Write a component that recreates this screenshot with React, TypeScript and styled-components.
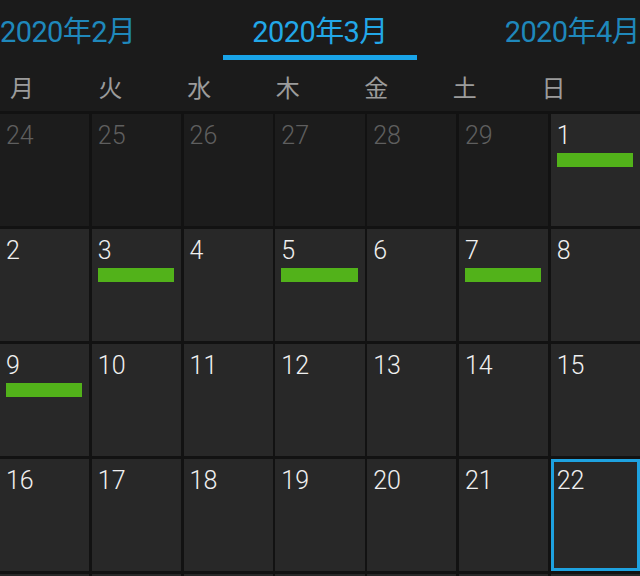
import styled, { createGlobalStyle } from "styled-components";

const GlobalStyle = createGlobalStyle`
  html, body {
    margin: 0;
    padding: 0;
    background: #1b1b1b;
    overflow: hidden;
  }
  body {
    font-family: Roboto, "Noto Sans CJK JP", sans-serif;
  }
`;

const Screen = styled.div`
  width: 640px;
  height: 576px;
  overflow: hidden;
  background: #1b1b1b;
  display: flex;
  flex-direction: column;
`;

const MonthTabs = styled.div`
  display: flex;
  justify-content: space-between;
  align-items: flex-start;
  height: 62px;
  flex-shrink: 0;
`;

const MonthTab = styled.div<{ $active?: boolean }>`
  font-family: Roboto, "Noto Sans CJK JP", sans-serif;
  font-size: 29px;
  letter-spacing: -0.6px;
  line-height: 34px;
  padding: 15px 0 6px;
  white-space: nowrap;
  text-align: center;
  color: ${(p) => (p.$active ? "#22a8e8" : "#1f88bb")};
  border-bottom: 5px solid ${(p) => (p.$active ? "#19a4e8" : "transparent")};
  width: ${(p) => (p.$active ? "194px" : "auto")};
`;

const WeekdayRow = styled.div`
  display: grid;
  grid-template-columns: repeat(7, 1fr);
  align-items: center;
  padding: 0 10px;
  height: 49px;
  flex-shrink: 0;
`;

const Weekday = styled.span`
  font-family: "Noto Sans CJK JP", sans-serif;
  font-size: 24px;
  line-height: 24px;
  color: #9c9c9c;
`;

const MonthGrid = styled.div`
  display: grid;
  grid-template-columns: repeat(7, 1fr);
  grid-auto-rows: 112px;
  column-gap: 2.5px;
  row-gap: 3px;
  padding-top: 3px;
  background: #121212;
`;

const DayCell = styled.div<{ $outside?: boolean; $selected?: boolean }>`
  box-sizing: border-box;
  display: flex;
  flex-direction: column;
  padding: 4px 4px 0 3px;
  border: 3px solid ${(p) => (p.$selected ? "#1ea2e0" : "transparent")};
  background: ${(p) => (p.$outside ? "#1c1c1c" : "#282828")};
`;

const DayNumber = styled.span<{ $outside?: boolean }>`
  font-family: Roboto, sans-serif;
  font-weight: 300;
  font-size: 25px;
  line-height: 30px;
  color: ${(p) => (p.$outside ? "#5f5f5f" : "#f0f0f0")};
`;

const EventBar = styled.div`
  margin-top: 2px;
  height: 14px;
  background: #52b21a;
`;

const weekdays = ["月", "火", "水", "木", "金", "土", "日"];

type Day = { date: number; outside: boolean };

function buildDays(): Day[] {
  const days: Day[] = [];
  for (let d = 24; d <= 29; d++) days.push({ date: d, outside: true });
  for (let d = 1; d <= 31; d++) days.push({ date: d, outside: false });
  for (let d = 1; d <= 5; d++) days.push({ date: d, outside: true });
  return days;
}

const eventDays = new Set([1, 3, 5, 7, 9]);
const selectedDay = 22;

export default function App() {
  const days = buildDays();
  return (
    <Screen>
      <GlobalStyle />
      <MonthTabs>
        <MonthTab>2020年2月</MonthTab>
        <MonthTab $active>2020年3月</MonthTab>
        <MonthTab>2020年4月</MonthTab>
      </MonthTabs>
      <WeekdayRow>
        {weekdays.map((w) => (
          <Weekday key={w}>{w}</Weekday>
        ))}
      </WeekdayRow>
      <MonthGrid>
        {days.map((day, i) => (
          <DayCell
            key={i}
            $outside={day.outside}
            $selected={!day.outside && day.date === selectedDay}
          >
            <DayNumber $outside={day.outside}>{day.date}</DayNumber>
            {!day.outside && eventDays.has(day.date) && <EventBar />}
          </DayCell>
        ))}
      </MonthGrid>
    </Screen>
  );
}
